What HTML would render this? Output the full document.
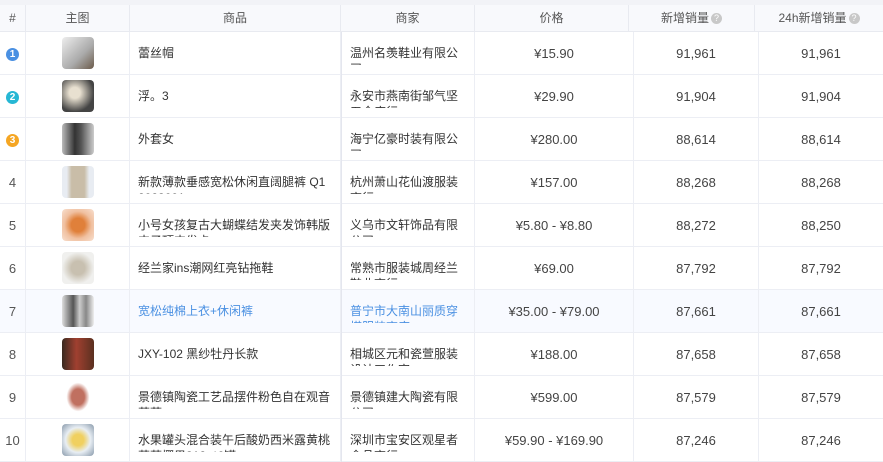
<!DOCTYPE html><html><head><meta charset="utf-8"><style>
*{margin:0;padding:0;box-sizing:border-box}
body{width:883px;height:461px;overflow:hidden;background:#fff;font-family:"Liberation Sans","Noto Sans CJK SC",sans-serif;font-size:12px;color:#333;position:relative}
.top{position:absolute;left:0;top:0;width:883px;height:5px;background:#f2f3f7}
.hd{position:absolute;top:5px;left:0;width:883px;height:27px;background:#f8f9fc;border-bottom:1px solid #e8eaf0}
.hd div{position:absolute;top:0;height:27px;line-height:27px;text-align:center;color:#555;border-right:1px solid #e8eaf0;font-size:12px}
.q{display:inline-block;width:11px;height:11px;border-radius:50%;background:#c8c8c8;color:#fff;font-size:9px;line-height:11px;text-align:center;vertical-align:1px;margin-left:2px}
.row{position:absolute;left:0;width:883px;height:43px;border-bottom:1px solid #eceef4}
.row.hl{background:#f8faff}
.c{position:absolute;top:0;height:43px;border-right:1px solid #eceef4}
.n{left:0;width:26px;text-align:center;line-height:43px;color:#555;font-size:13px}
.im{left:26px;width:104px}
.im i{position:absolute;left:36px;top:5px;width:32px;height:32px;border-radius:4px}
.p{left:130px;width:211px}
.m{left:341px;width:134px;border-left:1px solid #e4e6ee}
.t{position:absolute;left:8px;top:13px;height:20px;overflow:hidden;line-height:16px;font-size:12px}
.p .t{width:192px}.m .t{width:112px}
.v{line-height:43px;text-align:center;color:#444;font-size:13px}
.pr{left:475px;width:159px}.s1{left:634px;width:125px}.s2{left:759px;width:124px;border-right:none}
.hl .t{color:#4a90e2}
.b{display:inline-block;width:13px;height:13px;border-radius:50%;color:#fff;font-size:10px;line-height:13px;font-weight:bold;vertical-align:middle}
</style></head><body>
<div class="top"></div>
<div class="hd">
<div style="left:0;width:26px">#</div><div style="left:26px;width:104px">主图</div><div style="left:130px;width:211px">商品</div><div style="left:341px;width:134px">商家</div><div style="left:475px;width:154px">价格</div><div style="left:629px;width:126px">新增销量<span class="q">?</span></div><div style="left:755px;width:128px;border:none">24h新增销量<span class="q">?</span></div>
</div>

<div class="row" style="top:32px"><div class="c n"><span class="b" style="background:#4a90e2">1</span></div><div class="c im"><i style="background:linear-gradient(135deg,#eee,#aaa 60%,#6b5a4a)"></i></div><div class="c p"><div class="t">蕾丝帽</div></div><div class="c m"><div class="t">温州名羡鞋业有限公司</div></div><div class="c v pr">¥15.90</div><div class="c v s1">91,961</div><div class="c v s2">91,961</div></div>
<div class="row" style="top:75px"><div class="c n"><span class="b" style="background:#26b7d4">2</span></div><div class="c im"><i style="background:radial-gradient(circle at 40% 40%,#e8e0d0 20%,#444 70%)"></i></div><div class="c p"><div class="t">浮。3</div></div><div class="c m"><div class="t">永安市燕南街邹气坚五金店行</div></div><div class="c v pr">¥29.90</div><div class="c v s1">91,904</div><div class="c v s2">91,904</div></div>
<div class="row" style="top:118px"><div class="c n"><span class="b" style="background:#f5a623">3</span></div><div class="c im"><i style="background:linear-gradient(90deg,#bbb,#333 40%,#555 60%,#ccc)"></i></div><div class="c p"><div class="t">外套女</div></div><div class="c m"><div class="t">海宁亿豪时装有限公司</div></div><div class="c v pr">¥280.00</div><div class="c v s1">88,614</div><div class="c v s2">88,614</div></div>
<div class="row" style="top:161px"><div class="c n">4</div><div class="c im"><i style="background:linear-gradient(90deg,#e8ecf2 15%,#c9bda8 30%,#c9bda8 70%,#e8ecf2 85%)"></i></div><div class="c p"><div class="t">新款薄款垂感宽松休闲直阔腿裤 Q1 2023001</div></div><div class="c m"><div class="t">杭州萧山花仙渡服装商行</div></div><div class="c v pr">¥157.00</div><div class="c v s1">88,268</div><div class="c v s2">88,268</div></div>
<div class="row" style="top:204px"><div class="c n">5</div><div class="c im"><i style="background:radial-gradient(circle,#e0803a 30%,#f0c0a0 60%,#f8e0d0)"></i></div><div class="c p"><div class="t">小号女孩复古大蝴蝶结发夹发饰韩版夹子顶夹发卡</div></div><div class="c m"><div class="t">义乌市文轩饰品有限公司</div></div><div class="c v pr">¥5.80 - ¥8.80</div><div class="c v s1">88,272</div><div class="c v s2">88,250</div></div>
<div class="row" style="top:247px"><div class="c n">6</div><div class="c im"><i style="background:radial-gradient(ellipse,#c8c0b0 30%,#f0f0ee 70%)"></i></div><div class="c p"><div class="t">经兰家ins潮网红亮钻拖鞋</div></div><div class="c m"><div class="t">常熟市服装城周经兰鞋业商行</div></div><div class="c v pr">¥69.00</div><div class="c v s1">87,792</div><div class="c v s2">87,792</div></div>
<div class="row hl" style="top:290px"><div class="c n">7</div><div class="c im"><i style="background:linear-gradient(90deg,#ddd,#555 35%,#ccc 55%,#888 75%,#eee)"></i></div><div class="c p"><div class="t">宽松纯棉上衣+休闲裤</div></div><div class="c m"><div class="t">普宁市大南山丽质穿搭服装商店</div></div><div class="c v pr">¥35.00 - ¥79.00</div><div class="c v s1">87,661</div><div class="c v s2">87,661</div></div>
<div class="row" style="top:333px"><div class="c n">8</div><div class="c im"><i style="background:linear-gradient(90deg,#3a2a20,#a04030 45%,#5a3020)"></i></div><div class="c p"><div class="t">JXY-102 黑纱牡丹长款</div></div><div class="c m"><div class="t">相城区元和瓷萱服装设计工作室</div></div><div class="c v pr">¥188.00</div><div class="c v s1">87,658</div><div class="c v s2">87,658</div></div>
<div class="row" style="top:376px"><div class="c n">9</div><div class="c im"><i style="background:radial-gradient(ellipse 40% 50%,#c07060 50%,#fff 90%)"></i></div><div class="c p"><div class="t">景德镇陶瓷工艺品摆件粉色自在观音菩萨</div></div><div class="c m"><div class="t">景德镇建大陶瓷有限公司</div></div><div class="c v pr">¥599.00</div><div class="c v s1">87,579</div><div class="c v s2">87,579</div></div>
<div class="row" style="top:419px"><div class="c n">10</div><div class="c im"><i style="background:radial-gradient(circle,#f0d060 25%,#e8eef4 55%,#8899aa)"></i></div><div class="c p"><div class="t">水果罐头混合装午后酸奶西米露黄桃草莓椰果312g*6罐</div></div><div class="c m"><div class="t">深圳市宝安区观星者食品商行</div></div><div class="c v pr">¥59.90 - ¥169.90</div><div class="c v s1">87,246</div><div class="c v s2">87,246</div></div>
</body></html>
